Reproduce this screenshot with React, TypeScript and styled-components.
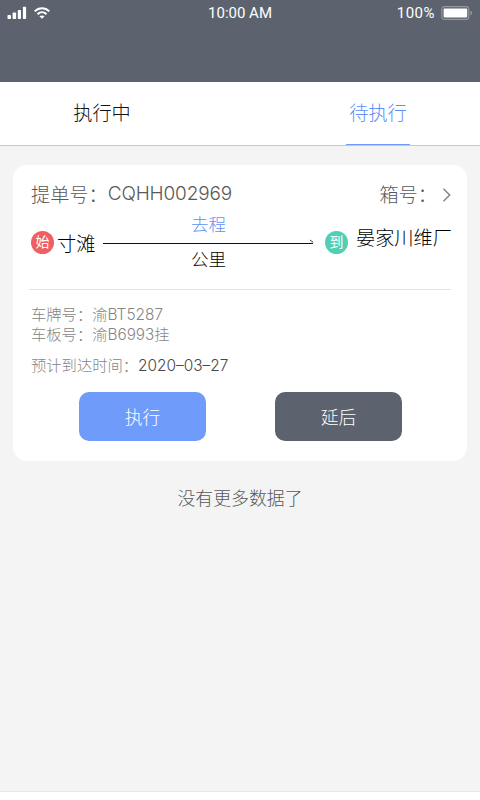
import React from 'react';
import styled, { createGlobalStyle } from 'styled-components';

const GlobalStyle = createGlobalStyle`
  * { box-sizing: border-box; }
  body { margin: 0; background: #fff; }
`;

const Screen = styled.div`
  width: 480px;
  height: 800px;
  display: flex;
  flex-direction: column;
  background: #fff;
  font-family: "Noto Sans CJK SC", sans-serif;
  font-weight: 300;
  overflow: hidden;
`;

const Header = styled.header`
  height: 82px;
  flex: none;
  background: #5c636e;
`;

const StatusBar = styled.div`
  display: grid;
  grid-template-columns: 1fr auto 1fr;
  align-items: center;
  height: 26px;
  padding: 0 7px;
  color: #fff;
  font: 400 15px/26px Roboto, sans-serif;
`;

const Signals = styled.div`
  display: flex;
  align-items: center;
  gap: 7px;
`;

const Battery = styled.div`
  display: flex;
  align-items: center;
  justify-content: flex-end;
  gap: 6px;
  letter-spacing: 0.5px;
`;

const Tabs = styled.nav`
  display: flex;
  flex: none;
  justify-content: space-between;
  height: 64px;
  padding: 0 70px;
  background: #fff;
  border-bottom: 1px solid #c8c8c8;
`;

const Tab = styled.div<{ $active?: boolean }>`
  width: 64px;
  height: 63px;
  border-bottom: 1px solid ${(p) => (p.$active ? '#6f9bfa' : 'transparent')};
  color: ${(p) => (p.$active ? '#5f8ff8' : '#111')};
  font-size: 19.2px;
  line-height: 61px;
  text-align: center;
`;

const Content = styled.main`
  flex: none;
  height: 646px;
  padding: 19px 13px 0;
  background: #f4f4f4;
  border-bottom: 1px solid #e8e8e8;
`;

const Card = styled.section`
  height: 296px;
  padding: 14px 16px 0 18px;
  background: #fff;
  border-radius: 14px;
`;

const TitleRow = styled.div`
  display: flex;
  height: 30px;
  font-size: 19.2px;
  line-height: 30px;
  color: #585858;
  white-space: nowrap;
`;

const Latin = styled.span<{ $size: number; $dark?: boolean }>`
  font-family: Inter, "Noto Sans CJK SC", sans-serif;
  font-size: ${(p) => p.$size}px;
  color: ${(p) => (p.$dark ? '#484848' : 'inherit')};
`;

const BillNumber = styled(Latin)`
  font-size: 19px;
  letter-spacing: -0.15px;
`;

const BoxNumber = styled.div`
  display: flex;
  align-items: center;
  margin-left: auto;
`;

const Chevron = styled.svg`
  margin: 1px -2px 0 0;
`;

const RouteRow = styled.div`
  display: flex;
  height: 80px;
  color: #000;
  font-size: 19.2px;
  line-height: 30px;
  white-space: nowrap;
`;

const Badge = styled.span<{ $color: string }>`
  width: 23px;
  height: 23px;
  flex: none;
  margin-top: 22px;
  border-radius: 50%;
  background: ${(p) => p.$color};
  color: #fff;
  font-size: 14px;
  font-weight: 400;
  line-height: 21px;
  text-align: center;
`;

const Place = styled.span<{ $top: number; $left: number; $width: number }>`
  width: ${(p) => p.$width}px;
  flex: none;
  margin: ${(p) => p.$top}px 0 0 ${(p) => p.$left}px;
`;

const Trip = styled.div`
  width: 211px;
  margin: 2px 11px 0 9px;
  display: flex;
  flex-direction: column;
  align-items: center;
  font-size: 17.5px;
  line-height: 26px;
`;

const Direction = styled.span`
  height: 27px;
  color: #5f8ff8;
`;

const Arrow = styled.svg`
  display: block;
  flex: none;
`;

const Divider = styled.hr`
  width: 422px;
  height: 1px;
  margin: 0 0 0 -2px;
  border: 0;
  background: #e4e4e4;
`;

const Details = styled.div`
  padding-top: 13px;
  color: #868686;
  font-size: 15.3px;
  line-height: 20px;
  white-space: nowrap;
`;

const Detail = styled.div<{ $gap?: number }>`
  height: 20px;
  margin-top: ${(p) => p.$gap ?? 0}px;
`;

const Actions = styled.div`
  display: flex;
  gap: 69px;
  padding: 18px 0 0 48px;
`;

const Button = styled.button<{ $color: string }>`
  width: 127px;
  height: 49px;
  padding: 0;
  border: 0;
  border-radius: 10px;
  background: ${(p) => p.$color};
  color: #fff;
  font: inherit;
  font-size: 17.8px;
  line-height: 49px;
`;

const EndNote = styled.p`
  margin: 22px 0 0;
  color: #585858;
  font-size: 17.9px;
  line-height: 28px;
  text-align: center;
`;

export default function App() {
  return (
    <Screen lang="zh-CN">
      <GlobalStyle />
      <Header>
        <StatusBar>
          <Signals>
            <svg width="20" height="14" viewBox="0 0 20 14" fill="#fff">
              <rect x="0.5" y="9" width="3.5" height="4" rx="0.8" />
              <rect x="5.6" y="6.5" width="3.5" height="6.5" rx="0.8" />
              <rect x="10.8" y="4" width="3.2" height="9" rx="0.8" />
              <rect x="15.9" y="0.8" width="3.2" height="12.2" rx="0.8" />
            </svg>
            <svg width="16" height="12" viewBox="0 0 16 12" fill="none" stroke="#fff" strokeWidth="2">
              <path d="M.7 4.4C4.9.2 11.1.2 15.3 4.4M3.5 7.2c2.6-2.5 6.4-2.5 9 0" />
              <path d="M8 11.8 5.4 9.3c1.5-1.2 3.7-1.2 5.2 0Z" fill="#fff" stroke="none" />
            </svg>
          </Signals>
          <span>10:00 AM</span>
          <Battery>
            <span>100%</span>
            <svg width="32" height="14" viewBox="0 0 32 14">
              <rect x="0.8" y="0.7" width="27" height="12.6" rx="2.5" fill="none" stroke="#9297a0" strokeWidth="1.2" />
              <rect x="2.6" y="2.6" width="23.6" height="8.8" rx="0.8" fill="#fff" />
              <path d="M29.3 4.8q2 .8 2 2.2t-2 2.2Z" fill="#9297a0" />
            </svg>
          </Battery>
        </StatusBar>
      </Header>
      <Tabs>
        <Tab>执行中</Tab>
        <Tab $active>待执行</Tab>
      </Tabs>
      <Content>
        <Card>
          <TitleRow>
            <span>提单号：</span>
            <BillNumber $size={19}>CQHH002969</BillNumber>
            <BoxNumber>
              <span>箱号：</span>
              <Chevron width="16" height="16" viewBox="0 0 16 16" fill="none" stroke="#808080" strokeWidth="1.4">
                <path d="m6.5 1.8 6.2 6.2-6.2 6.2" />
              </Chevron>
            </BoxNumber>
          </TitleRow>
          <RouteRow>
            <Badge $color="#ee5e62">始</Badge>
            <Place $top={19} $left={3} $width={37}>寸滩</Place>
            <Trip>
              <Direction>去程</Direction>
              <Arrow width="211" height="8" viewBox="0 0 211 8" fill="none" stroke="#111">
                <path d="M0 5.5h210" />
                <path d="m207 2 3.2 2.3" strokeWidth="0.8" />
              </Arrow>
              <span>公里</span>
            </Trip>
            <Badge $color="#51cfb5">到</Badge>
            <Place $top={13} $left={8} $width={96}>晏家川维厂</Place>
          </RouteRow>
          <Divider />
          <Details>
            <Detail>车牌号：渝<Latin $size={15.4}>BT5287</Latin></Detail>
            <Detail>车板号：渝<Latin $size={15.3}>B6993</Latin>挂</Detail>
            <Detail $gap={11}>预计到达时间：<Latin $size={15.4} $dark>2020–03–27</Latin></Detail>
          </Details>
          <Actions>
            <Button $color="#6f9bfa">执行</Button>
            <Button $color="#5c636e">延后</Button>
          </Actions>
        </Card>
        <EndNote>没有更多数据了</EndNote>
      </Content>
    </Screen>
  );
}
